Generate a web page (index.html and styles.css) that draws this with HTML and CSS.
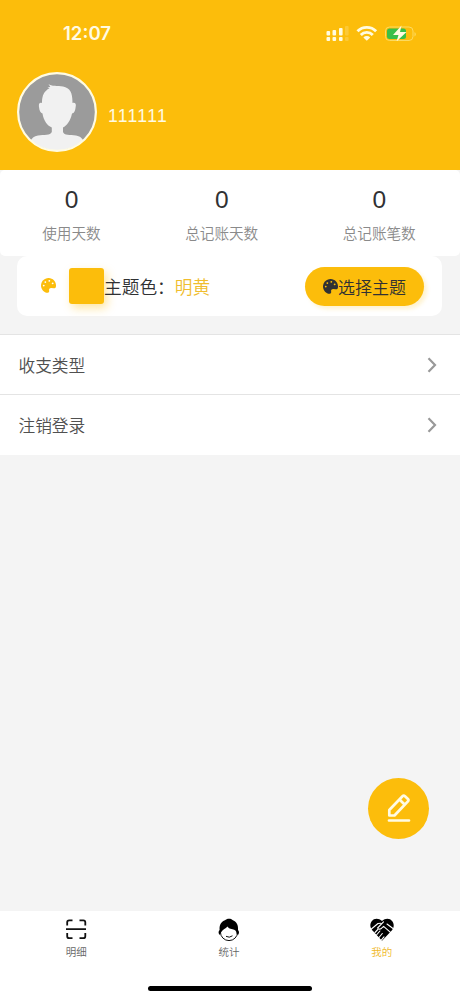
FILE: index.html
```html
<!DOCTYPE html>
<html lang="zh-CN">
<head>
<meta charset="utf-8">
<title>我的</title>
<link rel="stylesheet" href="styles.css">
</head>
<body>
<svg class="defs" width="0" height="0">
  <symbol id="palette" viewBox="0 0 512 512"><path fill="currentColor" transform="rotate(10 256 256)" d="M204.3 5C104.900 24.400 24.800 104.300 5.200 203.400c-37 187 131.700 326.400 258.800 306.700 41.200-6.400 61.400-54.600 42.500-91.700-23.100-45.400 9.900-98.400 60.900-98.400h79.700c35.800 0 64.800-29.600 64.900-65.300C511.500 97.100 368.100-26.900 204.300 5zM96 320c-17.700 0-32-14.300-32-32s14.300-32 32-32 32 14.300 32 32-14.300 32-32 32zm32-128c-17.700 0-32-14.300-32-32s14.300-32 32-32 32 14.300 32 32-14.300 32-32 32zm128-64c-17.700 0-32-14.300-32-32s14.300-32 32-32 32 14.300 32 32-14.300 32-32 32zm128 64c-17.700 0-32-14.300-32-32s14.300-32 32-32 32 14.300 32 32-14.300 32-32 32z"/></symbol>
</svg>
<div class="screen">
  <header class="header">
    <div class="status">
      <span class="clock">12:07</span>
      <svg class="status-icons" width="92" height="20" viewBox="0 0 92 20">
        <g fill="#fffbe0">
          <rect x="0.500" y="10" width="3.600" height="4.500" rx="1"/><rect x="6.500" y="9" width="3.600" height="5.500" rx="1"/><rect x="13" y="7" width="3.600" height="7.500" rx="1"/>
          <rect x="0.500" y="16" width="3.600" height="4" rx="1"/><rect x="6.500" y="16" width="3.600" height="4" rx="1"/><rect x="13" y="16" width="3.600" height="4" rx="1"/>
          <g opacity=".2"><rect x="19" y="5" width="3.600" height="9.500" rx="1"/><rect x="19" y="16" width="3.600" height="4" rx="1"/></g>
        </g>
        <g fill="none" stroke="#fffbe0" stroke-width="2.900">
          <path d="M31.500 10.300a13 13 0 0 1 18.600 0"/><path d="M34.800 13.900a8.400 8.400 0 0 1 12 0"/>
        </g>
        <path d="M37.400 16.400a4.800 4.800 0 0 1 6.800 0L40.800 19.700z" fill="#fffbe0"/>
        <rect x="59.500" y="6" width="27.500" height="13.500" rx="4" fill="none" stroke="#fdda60"/>
        <path d="M88.500 11v4.500c1.800-.8 1.800-3.700 0-4.500z" fill="#fdda60"/>
        <rect x="61" y="7.500" width="19" height="10.500" rx="2.500" fill="#39bf48"/>
        <path d="M75.500 4.500 67 14h5.500L70.500 20.500l10-9.500h-6.500z" fill="#fffbe0"/>
      </svg>
    </div>
    <div class="profile">
      <svg class="avatar" width="80" height="80" viewBox="0 0 80 80">
        <defs><clipPath id="face"><circle cx="40" cy="40" r="38.500"/></clipPath></defs>
        <circle cx="40" cy="40" r="39" fill="#9b9b9b"/>
        <path clip-path="url(#face)" fill="#f1f1f1" d="M31.500 12C34 14.500 41 13.500 46 14.600C53 16.200 55.500 20 55.500 31C58 30 59.300 31.500 58.700 34.500C58.200 39.500 57 41.300 55 41.500C53.500 49 49.800 53.500 46 55.500V60C47 63.500 53 62.700 59 63.500C64 64.300 65.500 67 67 70V80H13V70C14.500 66 17 64.200 21 63.500C27 62.700 33.500 63.500 34.800 60V55.500C30 53.500 26.500 48 25.500 41.500C23.500 41 22.500 39 22 35C21.500 31.500 22.700 30 25 31C24.800 24 27 19 32.500 16.200L30.500 15.200L33.300 15.100Z"/>
        <circle cx="40" cy="40" r="38.900" fill="none" stroke="#fffbe2" stroke-width="2.200"/>
      </svg>
      <span class="nickname">111111</span>
    </div>
  </header>

  <section class="stats">
    <div class="stat"><span class="num">0</span><span class="label">使用天数</span></div>
    <div class="stat"><span class="num">0</span><span class="label">总记账天数</span></div>
    <div class="stat"><span class="num">0</span><span class="label">总记账笔数</span></div>
  </section>

  <section class="theme">
    <svg class="palette" width="15" height="15"><use href="#palette"/></svg>
    <span class="swatch"></span>
    <span class="theme-label">主题色：</span><span class="theme-name">明黄</span>
    <button class="choose"><svg width="15" height="15"><use href="#palette"/></svg>选择主题</button>
  </section>

  <nav class="menu">
    <a class="row">收支类型<svg width="10" height="16" viewBox="0 0 10 16"><path d="M1.500 1.300 8 8l-6.500 6.700" fill="none" stroke="#999" stroke-width="2.200"/></svg></a>
    <a class="row">注销登录<svg width="10" height="16" viewBox="0 0 10 16"><path d="M1.500 1.300 8 8l-6.500 6.700" fill="none" stroke="#999" stroke-width="2.200"/></svg></a>
  </nav>

  <button class="fab">
    <svg width="26" height="30" viewBox="0 0 26 30" fill="none" stroke="#fffbe4" stroke-width="2.700" stroke-linejoin="round" stroke-linecap="round"><path d="M3.300 22.500V17L16.500 3.200Q17.700 2 19 3.200L21.900 6Q23 7.200 21.900 8.400L8.500 22.500ZM13.500 6.500l5.300 5.300M3 27.500H23"/></svg>
  </button>

  <footer class="tabbar">
    <a class="tab">
      <svg width="24" height="24" viewBox="0 0 24 24" fill="none" stroke="#111" stroke-width="1.800"><path d="M3.200 8.500V5.200Q3.200 3.300 5.200 3.300H8.500M15.500 3.300h3.800q2 0 2 2v3.200M3.200 16v3.200q0 2 2 2h3.300M15.500 21.200h3.800q2 0 2-2V16M2 12.200H22"/></svg>
      <span>明细</span>
    </a>
    <a class="tab">
      <svg width="24" height="24" viewBox="0 0 24 24"><circle cx="12" cy="15" r="8.600" fill="#fff" stroke="#111" stroke-width="1"/><path d="M2.500 18C1.200 16 1.300 14.300 2.600 13C2.200 7.500 4.500 4.500 8 3.300C9.500 1.300 14 1.200 15.500 3C19.500 4.500 21.500 8 21 13C22.500 14.500 22.200 16.500 21 18L19.500 16.500C19.500 14 18 12.500 15.500 12.200C12.500 12 11 10.500 10.500 9.500C8.500 12 6 12 4.300 15Z" fill="#000"/><path d="M9 19.300q3.300 2 6.500-.5" fill="none" stroke="#111"/></svg>
      <span>统计</span>
    </a>
    <a class="tab active">
      <svg width="26" height="24" viewBox="0 0 26 24"><path fill="#000" d="M13 4C9.500.8 5 1.200 2.700 4.200C.4 7.300 1.200 11 4 14L13 23.800L22.300 14C25 11 25.600 7.300 23.300 4.200C21 1.200 16.500.8 13 4Z"/><g fill="none" stroke="#fff" stroke-width="1.100" stroke-linecap="round" stroke-linejoin="round"><path d="M1.800 12.500 9 6.500l2.800-.3M14.500 4.800 8.600 11q1.400 2.200 4 .2l2-1.800 8 7M18 7l6 4.500M6 15.500l2.800-3M7.500 18l3.400-4M10 20.500l3.300-4M12.500 22.800l2.500-3"/></g></svg>
      <span>我的</span>
    </a>
    <i class="home-bar"></i>
  </footer>
</div>
</body>
</html>
```
FILE: styles.css
```css
* { box-sizing: border-box; }
body { margin: 0; font-family: "Inter", "Noto Sans CJK SC", sans-serif; font-weight: 350; }
svg { display: block; flex: none; }
.defs { position: absolute; }
button { border: 0; padding: 0; font: inherit; }
.screen { position: relative; width: 460px; height: 1000px; display: flex; flex-direction: column; background: #f4f4f4; overflow: hidden; }

.header { height: 170px; background: #fcbd0b; color: #fffbe4; }
.status { display: flex; justify-content: space-between; height: 72px; padding: 20px 42px 0 63px; }
.clock { font-size: 18.600px; line-height: 26px; font-weight: 600; }
.status-icons { margin-top: 1px; }
.profile { display: flex; align-items: center; padding-left: 17px; }
.nickname { margin: 8px 0 0 11px; font: 17.600px/24px "Liberation Sans", sans-serif; font-kerning: none; }

.stats { display: flex; justify-content: space-around; height: 86px; padding: 15px 2px 0 0; background: #fff; border-radius: 5px; }
.stat { display: flex; flex-direction: column; align-items: center; }
.num { height: 30px; font: 24.500px/30px "Liberation Sans", sans-serif; color: #303133; }
.label { margin-top: 8px; font-size: 14.600px; line-height: 22px; color: #8a8a8a; }

.theme { display: flex; align-items: center; height: 60px; margin: 0 18px 18px 17px; padding: 0 18px 0 24px; background: #fff; border-radius: 10px; font-size: 17.700px; color: #303133; }
.palette { color: #fcbd0b; margin-top: -1px; }
.swatch { width: 35px; height: 36px; margin-left: 13px; border-radius: 3px; background: #fcbd0b; box-shadow: 3px 4px 10px rgba(252, 189, 11, .38); }
.theme-name { color: #f0bd2e; }
.choose { display: flex; align-items: center; justify-content: center; width: 119px; height: 39px; margin-left: auto; border-radius: 20px; background: #fcbd0b; color: #303133; font-size: 17px; box-shadow: 3px 3px 4px rgba(252, 189, 11, .2); }

.menu { background: #fff; }
.row { display: flex; align-items: center; justify-content: space-between; height: 60px; padding: 0 23px 0 18.500px; border-top: 1px solid #e4e4e4; font-size: 16.700px; color: #505050; }
.row:last-child { height: 61px; }

.fab { position: absolute; left: 368px; top: 777.500px; display: flex; align-items: center; justify-content: center; width: 61px; height: 61px; border-radius: 50%; background: #fcbd0b; }

.tabbar { position: relative; display: flex; height: 89px; margin-top: auto; padding-right: 2px; background: #fff; }
.tab { flex: 1; display: flex; flex-direction: column; align-items: center; padding-top: 6px; font-size: 10.500px; line-height: 16px; color: #666; }
.tab span { margin-top: 4px; }
.active { color: #f0b92a; }
.home-bar { position: absolute; left: 148px; bottom: 9px; width: 164px; height: 5px; border-radius: 3px; background: #000; }
```
